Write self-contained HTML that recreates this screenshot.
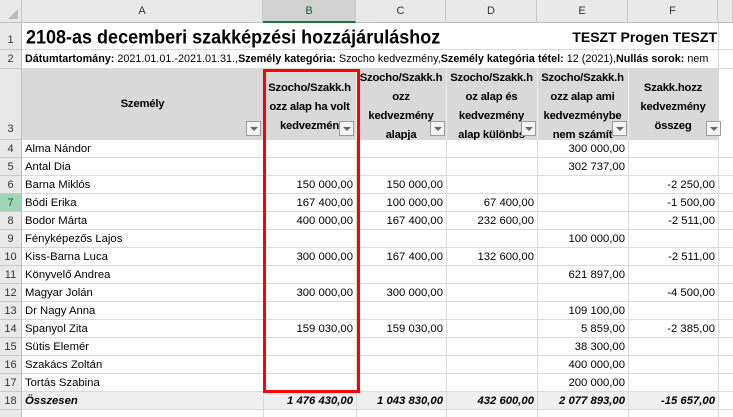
<!DOCTYPE html>
<html><head><meta charset="utf-8"><style>
*{margin:0;padding:0;box-sizing:border-box}
html,body{width:733px;height:417px;overflow:hidden}
body{background:#fff;font-family:"Liberation Sans",sans-serif;font-size:11px;color:#000;position:relative}
.a{position:absolute}
.ch{position:absolute;top:0;height:23px;background:#e9e9e9;border-right:1px solid #c8c8c8;border-bottom:1px solid #bdbdbd;text-align:center;line-height:23px;font-size:11px;color:#333}
.rn{position:absolute;left:0;width:22px;background:#e9e9e9;border-bottom:1px solid #c8c8c8;border-right:1px solid #bdbdbd;text-align:center;font-size:11px;color:#333}
.vl{position:absolute;top:140px;height:277px;width:1px;background:#d9d9d9}
.hl{position:absolute;left:22px;width:711px;height:1px;background:#d9d9d9}
.c{position:absolute;height:18px;line-height:18px;white-space:nowrap;font-size:11.3px}
.r{text-align:right;padding-right:3px}
.h{position:absolute;top:69px;height:71px;text-align:center;font-weight:bold;font-size:11.3px;line-height:19px;white-space:nowrap;overflow:hidden;letter-spacing:-0.2px}
.fb{position:absolute;width:15px;height:15px;background:#f4f4f4;border:1px solid #9a9a9a}
.fb:after{content:"";position:absolute;left:3px;top:5px;border-left:4px solid transparent;border-right:4px solid transparent;border-top:4px solid #666}
</style></head><body>
<div class="ch" style="left:0;width:22px;background:#e9e9e9"><div class="a" style="right:3px;bottom:3px;border-left:10px solid transparent;border-bottom:10px solid #bbb"></div></div>
<div class="ch" style="left:22px;width:241px">A</div>
<div class="ch" style="left:263px;width:93px;background:#d2d2d2;border-bottom:2px solid #217346;color:#1e5a32">B</div>
<div class="ch" style="left:356px;width:90px">C</div>
<div class="ch" style="left:446px;width:91px">D</div>
<div class="ch" style="left:537px;width:91px">E</div>
<div class="ch" style="left:628px;width:90px">F</div>
<div class="ch" style="left:718px;width:15px"></div>
<div class="rn" style="top:23px;height:27px;line-height:34px">1</div>
<div class="rn" style="top:50px;height:19px;line-height:19px">2</div>
<div class="rn" style="top:69px;height:71px;line-height:120px">3</div>
<div class="a" style="left:22px;top:69px;width:696px;height:71px;background:#d9d9d9"></div>
<div class="a" style="left:22px;top:392px;width:696px;height:18px;background:#efefef"></div>
<div class="a" style="left:22px;top:391px;width:696px;height:1px;background:#000"></div>
<div class="vl" style="left:356px"></div><div class="vl" style="left:446px"></div><div class="vl" style="left:537px"></div><div class="vl" style="left:628px"></div><div class="vl" style="left:718px"></div>
<div class="vl" style="left:263px"></div>
<div class="a" style="left:718px;top:23px;width:1px;height:117px;background:#d9d9d9"></div>
<div class="a" style="left:22px;top:49px;width:711px;height:1px;background:#d9d9d9"></div>
<div class="a" style="left:22px;top:68px;width:711px;height:1px;background:#d9d9d9"></div>
<div class="a" style="left:356px;top:69px;width:1px;height:71px;background:#eee"></div>
<div class="a" style="left:446px;top:69px;width:1px;height:71px;background:#eee"></div>
<div class="a" style="left:537px;top:69px;width:1px;height:71px;background:#eee"></div>
<div class="a" style="left:628px;top:69px;width:1px;height:71px;background:#eee"></div>
<div class="a" style="left:26px;top:24px;font-size:18px;font-weight:bold;line-height:27px;white-space:nowrap;transform:scaleY(1.08);transform-origin:left center">2108-as decemberi szakképzési hozzájáruláshoz</div>
<div class="a" style="left:537px;top:24px;width:180px;text-align:right;font-size:14px;font-weight:bold;line-height:26px;white-space:nowrap">TESZT Progen TESZT</div>
<div class="a" style="left:25px;top:50px;line-height:19px;font-size:10.8px;white-space:nowrap"><b>Dátumtartomány:</b> 2021.01.01.-2021.01.31.,<b>Személy kategória:</b> Szocho kedvezmény,<b>Személy kategória tétel:</b> 12 (2021),<b>Nullás sorok:</b> nem</div>
<div class="h" style="left:22px;width:241px;line-height:71px">Személy</div>
<div class="h" style="left:263px;width:93px;padding-top:10px">Szocho/Szakk.h<br>ozz alap ha volt<br>kedvezmén</div>
<div class="h" style="left:356px;width:90px">Szocho/Szakk.h<br>ozz<br>kedvezmény<br>alapja</div>
<div class="h" style="left:446px;width:91px">Szocho/Szakk.h<br>oz alap és<br>kedvezmény<br>alap különbs</div>
<div class="h" style="left:537px;width:91px">Szocho/Szakk.h<br>ozz alap ami<br>kedvezménybe<br>nem számít</div>
<div class="h" style="left:628px;width:90px;padding-top:10px">Szakk.hozz<br>kedvezmény<br>összeg</div>
<div class="fb" style="left:246px;top:121px"></div>
<div class="fb" style="left:339px;top:121px"></div>
<div class="fb" style="left:430px;top:121px"></div>
<div class="fb" style="left:521px;top:121px"></div>
<div class="fb" style="left:612px;top:121px"></div>
<div class="fb" style="left:706px;top:121px"></div>
<div id="data"></div>
<script>
var d=[["Alma Nándor","","","","300 000,00",""],["Antal Dia","","","","302 737,00",""],["Barna Miklós","150 000,00","150 000,00","","","-2 250,00"],["Bódi Erika","167 400,00","100 000,00","67 400,00","","-1 500,00"],["Bodor Márta","400 000,00","167 400,00","232 600,00","","-2 511,00"],["Fényképezős Lajos","","","","100 000,00",""],["Kiss-Barna Luca","300 000,00","167 400,00","132 600,00","","-2 511,00"],["Könyvelő Andrea","","","","621 897,00",""],["Magyar Jolán","300 000,00","300 000,00","","","-4 500,00"],["Dr Nagy Anna","","","","109 100,00",""],["Spanyol Zita","159 030,00","159 030,00","","5 859,00","-2 385,00"],["Sütis Elemér","","","","38 300,00",""],["Szakács Zoltán","","","","400 000,00",""],["Tortás Szabina","","","","200 000,00",""],["Összesen","1 476 430,00","1 043 830,00","432 600,00","2 077 893,00","-15 657,00"]];
var L=[22,263,356,446,537,628,718],h="";
for(var i=0;i<16;i++){var y=140+i*18;var n=i+4;
h+='<div class="rn" style="top:'+y+'px;height:18px;line-height:19px;'+(n==7?'background:#9fd5b7;color:#1e5a32;':'')+'">'+(n<19?n:'')+'</div>';
h+='<div class="hl" style="top:'+(y+17)+'px"></div>';
if(i<15){var r=d[i],st=i==14?'font-weight:bold;font-style:italic;':'';
h+='<div class="c" style="left:25px;top:'+y+'px;'+st+'">'+r[0]+'</div>';
for(var k=1;k<6;k++)if(r[k])h+='<div class="c r" style="left:'+L[k]+'px;width:'+(L[k+1]-L[k])+'px;top:'+y+'px;'+st+'">'+r[k]+'</div>';}}
document.getElementById('data').innerHTML=h;
</script>
<div class="a" style="left:263px;top:69px;width:97px;height:324px;border:3px solid #ff0000"></div>
</body></html>
